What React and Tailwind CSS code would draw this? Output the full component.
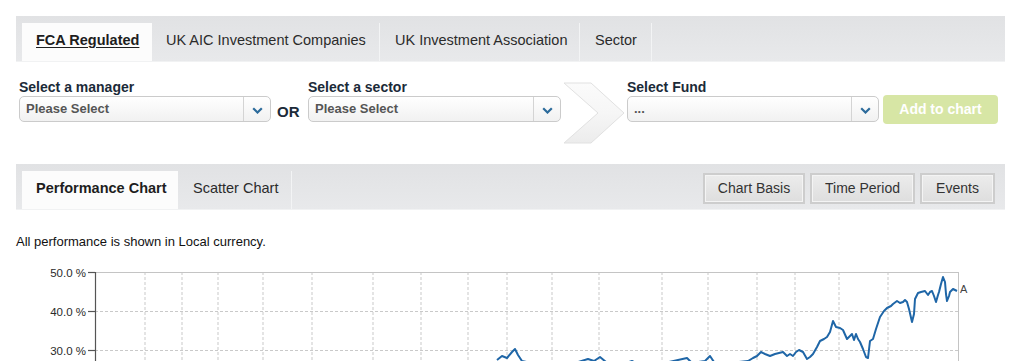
import React from "react";

const Chevron = () => (
  <svg width="11" height="7" viewBox="0 0 11 7">
    <path d="M1.2 1.2 L5.5 5.5 L9.8 1.2" fill="none" stroke="#2c6b9b" strokeWidth="2.2" />
  </svg>
);

function Select({ text, width }) {
  return (
    <div
      className="flex h-[26px] rounded-[5px] border border-[#cbcbcb] bg-linear-to-b from-white to-[#f1f1f1]"
      style={{ width }}
    >
      <div className="flex-1 flex items-center pl-[6px] pb-[1px] text-[13px] font-bold text-[#555]">{text}</div>
      <div className="w-[27px] border-l border-[#d4d4d4] flex items-center justify-center pt-[2px]">
        <Chevron />
      </div>
    </div>
  );
}

const linePts =
  "497,361 502,357 507,359 512,353 515,350 518,356 522,362 540,366 575,364 588,360 594,362 600,358 606,363 620,366 632,362 640,366 660,365 687,359 692,364 705,362 710,357 714,363 730,364 748,362 753,359 757,357 761,353 765,355 770,357 775,355 779,354 783,353 787,357 790,355 793,357 796,353 799,351 803,353 807,360 810,358 813,355 817,348 820,342 824,340 827,338 830,333 833,322 836,328 840,329 843,331 847,340 850,337 852,335 854,341 856,335 858,340 860,343 863,350 866,358 868,359 870,342 873,340 876,330 880,318 884,312 887,309 891,307 893,305 897,302 900,304 903,303 905,301 907,303 909,310 912,323 914,315 915,300 918,294 921,293 925,292 928,296 930,293 932,292 934,297 936,303 938,296 939,293 941,285 943,278 945,283 946,295 947,302 949,297 950,293 953,290 955,291 957,292";

const gridX = [145, 182, 218, 263, 312, 373, 421, 468, 507, 552, 599, 662, 708, 757, 795, 839, 888];

function TabBar({ tabs, right }) {
  return (
    <div className="mx-[16px] w-[989px] h-[46px] flex items-end justify-between pl-[6px] pr-[10px] bg-linear-to-b from-[#e1e2e4] to-[#e8e9eb] border-b border-[#f1f2f3]">
      <div className="flex items-end h-full">
        {tabs.map((t) => (
          <div
            key={t.label}
            className={
              "h-[38px] flex items-center pb-[3px] text-[14.5px] " +
              (t.active
                ? "bg-[#fcfcfc] font-bold text-[#1e1e1e]"
                : "text-[#2b2b2b] border-r border-[#f3f4f5]")
            }
            style={{ width: t.w, paddingLeft: t.pl }}
          >
            <span className={t.underline ? "underline underline-offset-2" : ""}>{t.label}</span>
          </div>
        ))}
      </div>
      {right}
    </div>
  );
}

function Btn({ label, w }) {
  return (
    <div
      className="h-[31px] flex items-center justify-center text-[14px] text-[#333] border-2 border-[#cdcdcd] bg-linear-to-b from-[#ececec] to-[#dedede] shadow-[inset_0_0_0_1px_#f4f4f4]"
      style={{ width: w }}
    >
      {label}
    </div>
  );
}

export default function App() {
  return (
    <div className="w-[1024px] h-[361px] overflow-hidden bg-white font-['Liberation_Sans',Arial,sans-serif] pt-[16px]">
      <TabBar
        tabs={[
          { label: "FCA Regulated", w: 130, pl: 14, active: true, underline: true },
          { label: "UK AIC Investment Companies", w: 228, pl: 14 },
          { label: "UK Investment Association", w: 200, pl: 15 },
          { label: "Sector", w: 72, pl: 15 },
        ]}
      />

      <div className="h-[102px] pt-[17px] pl-[19px] flex items-start">
        <div className="flex flex-col">
          <div className="h-[17px] leading-[17px] text-[14px] font-bold text-[#1b2a38]">Select a manager</div>
          <Select text="Please Select" width={252} />
        </div>
        <div className="mt-[22px] ml-[6px] w-[31px] text-[15px] font-bold text-[#1b2a38]">OR</div>
        <div className="flex flex-col">
          <div className="h-[17px] leading-[17px] text-[14px] font-bold text-[#1b2a38]">Select a sector</div>
          <Select text="Please Select" width={253} />
        </div>
        <svg width="66" height="64" viewBox="559 82 66 64" className="mt-[3px]">
          <defs>
            <linearGradient id="chev" x1="0" y1="0" x2="0" y2="1">
              <stop offset="0" stopColor="#fbfbfb" />
              <stop offset="0.5" stopColor="#f6f6f6" />
              <stop offset="1" stopColor="#ececec" />
            </linearGradient>
          </defs>
          <polygon
            points="562,83 589,83 622,113 589,143 562,143 596,113"
            fill="url(#chev)"
            stroke="#e1e1e1"
            strokeWidth="1"
          />
        </svg>
        <div className="flex flex-col">
          <div className="h-[17px] leading-[17px] text-[14px] font-bold text-[#1b2a38]">Select Fund</div>
          <Select text="..." width={252} />
        </div>
        <div className="mt-[16px] ml-[4px] w-[115px] h-[29px] rounded-[4px] bg-[#d7e6a5] flex items-center justify-center text-[14px] font-bold text-white">
          Add to chart
        </div>
      </div>

      <TabBar
        tabs={[
          { label: "Performance Chart", w: 156, pl: 14, active: true },
          { label: "Scatter Chart", w: 114, pl: 15 },
        ]}
        right={
          <div className="flex gap-[5px] self-center mt-[4px]">
            <Btn label="Chart Basis" w={102} />
            <Btn label="Time Period" w={105} />
            <Btn label="Events" w={75} />
          </div>
        }
      />

      <div className="mt-[24px] pl-[16px] h-[16px] leading-[16px] text-[13px] text-[#111]">
        All performance is shown in Local currency.
      </div>

      <svg width="1024" height="120" viewBox="0 265 1024 120" className="block mt-[14px]">
        {gridX.map((x) => (
          <line key={x} x1={x} y1={273} x2={x} y2={385} stroke="#c9c9c9" strokeWidth="1" strokeDasharray="3 2" />
        ))}
        <line x1={95} y1={312.5} x2={958} y2={312.5} stroke="#c9c9c9" strokeWidth="1" strokeDasharray="3 2" />
        <line x1={95} y1={351.5} x2={958} y2={351.5} stroke="#c9c9c9" strokeWidth="1" strokeDasharray="3 2" />
        <line x1={95} y1={273.5} x2={958} y2={273.5} stroke="#c4c4c4" strokeWidth="1" />
        <line x1={958.5} y1={273} x2={958.5} y2={385} stroke="#c4c4c4" strokeWidth="1" />
        <line x1={95.5} y1={273} x2={95.5} y2={385} stroke="#555" strokeWidth="1.2" />
        {[273.5, 312.5, 351.5].map((y) => (
          <line key={y} x1={88} y1={y} x2={95} y2={y} stroke="#555" strokeWidth="1.2" />
        ))}
        {[
          ["50.0 %", 273.5],
          ["40.0 %", 312.5],
          ["30.0 %", 351.5],
        ].map(([t, y]) => (
          <text key={t} x={86} y={y + 4} textAnchor="end" fontSize="11.5" fill="#2a2a2a" fontFamily="Liberation Sans, Arial, sans-serif">
            {t}
          </text>
        ))}
        <polyline points={linePts} fill="none" stroke="#1f66a7" strokeWidth="2" strokeLinejoin="round" />
        <text x={960} y={294} fontSize="11" fill="#444" fontFamily="Liberation Sans, Arial, sans-serif">A</text>
      </svg>
    </div>
  );
}
